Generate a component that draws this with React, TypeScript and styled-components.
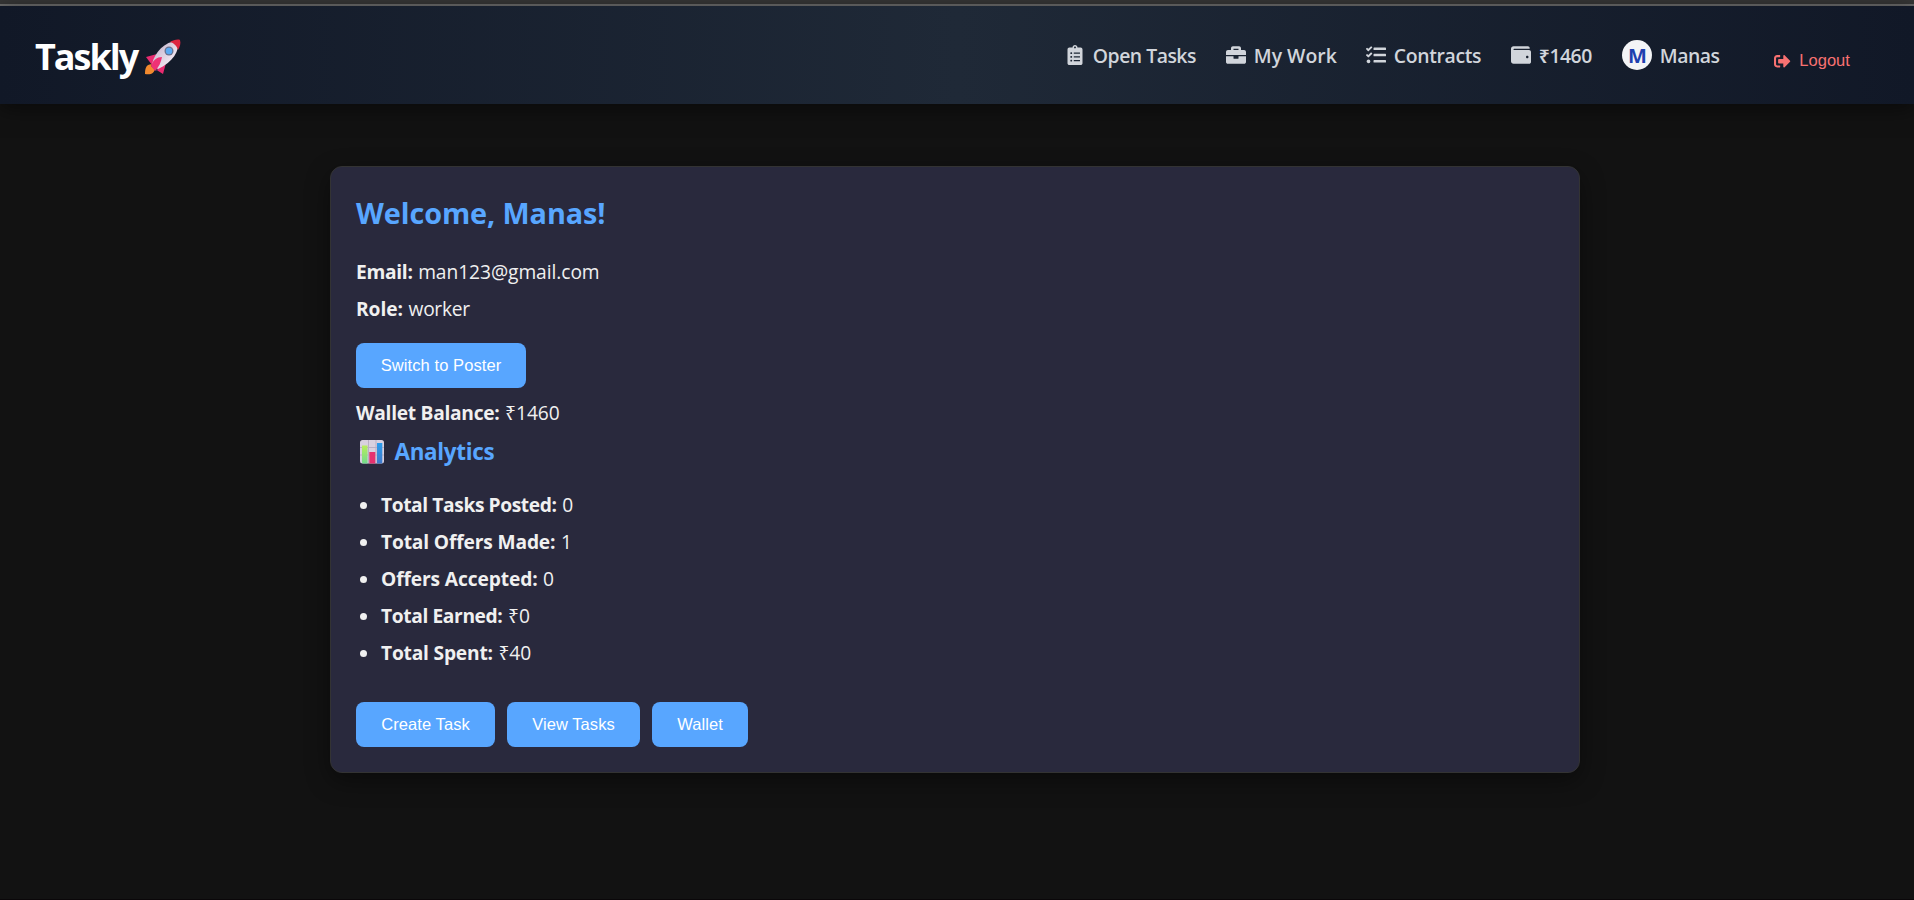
import React from "react";
import styled, { createGlobalStyle } from "styled-components";
import { FaClipboardList, FaBriefcase, FaTasks, FaWallet, FaSignOutAlt } from "react-icons/fa";

const GlobalStyle = createGlobalStyle`
  * { box-sizing: border-box; }
  body {
    margin: 0;
    background: #121212;
    color: #f0f0f0;
    font-family: "Segoe UI", "Open Sans", "Noto Sans", sans-serif;
    overflow: hidden;
  }
`;

const Page = styled.div`
  min-height: 900px;
  display: flex;
  flex-direction: column;
  border-bottom: 1px solid #0a0709;
`;

const TopEdge = styled.div`
  height: 6px;
  background: #363636;
  border-bottom: 2px solid #6b6b6b;
`;

const Header = styled.header`
  height: 98px;
  padding: 0 64px 0 35px;
  display: flex;
  align-items: flex-start;
  justify-content: space-between;
  background: linear-gradient(90deg, #111827, #1f2937, #111827);
  box-shadow: 0 4px 20px rgba(0, 0, 0, 0.5);
`;

const Brand = styled.div`
  display: flex;
  align-items: center;
  gap: 7px;
  padding-top: 26px;
  color: #fff;
  font-size: 36px;
  font-weight: 700;
  line-height: 50px;
  letter-spacing: -2px;
`;

const Nav = styled.nav`
  display: flex;
  padding-top: 34px;
`;

const NavItem = styled.a<{ $width: number }>`
  width: ${(p) => p.$width}px;
  height: 30px;
  display: flex;
  align-items: center;
  gap: 7.5px;
  color: #d1d5db;
  font-size: 20px;
  svg { flex: none; }
`;

const NavLabel = styled.span<{ $tracking: number }>`
  padding-top: 2px;
  font-size: 19.4px;
  font-weight: 600;
  line-height: 30px;
  letter-spacing: ${(p) => p.$tracking}px;
  white-space: nowrap;
`;

const Avatar = styled.span`
  width: 30px;
  height: 30px;
  border-radius: 50%;
  flex: none;
  background: #f3f4f6;
  color: #1e40af;
  font-weight: 700;
  line-height: 31px;
  text-align: center;
`;

const Logout = styled.button`
  display: flex;
  align-items: center;
  gap: 8.4px;
  height: 24px;
  margin-top: 9px;
  padding: 0;
  border: 0;
  background: none;
  color: #f87171;
  font: 16.5px/24px "Liberation Sans", Arial, sans-serif;
`;

const LogoutLabel = styled.span`
  padding-bottom: 2px;
  letter-spacing: 0.05px;
`;

const Card = styled.main`
  width: 1250px;
  height: 607px;
  margin: 62px 0 0 330px;
  padding: 25px;
  border: 1px solid #333;
  border-radius: 12px;
  background: #29293d;
  box-shadow: 0 8px 24px rgba(0, 0, 0, 0.4);
`;

const Title = styled.h2`
  margin: 0 0 20px;
  padding-top: 1px;
  color: #58a6ff;
  font-size: 28.8px;
  font-weight: 700;
  line-height: 40px;
  letter-spacing: -0.08px;
`;

const Line = styled.p`
  margin: 0;
  font-size: 19.2px;
  line-height: 37px;
`;

const Label = styled.strong<{ $tracking: number }>`
  letter-spacing: ${(p) => p.$tracking}px;
`;

const Value = styled.span<{ $tracking?: number }>`
  margin-left: 5.6px;
  letter-spacing: ${(p) => p.$tracking ?? -0.06}px;
`;

const Action = styled.button<{ $width: number }>`
  width: ${(p) => p.$width}px;
  height: 45px;
  padding: 0;
  border: 0;
  border-radius: 8px;
  background: #58a6ff;
  color: #fff;
  font: 16.5px "Liberation Sans", Arial, sans-serif;
  letter-spacing: 0.08px;
`;

const SwitchRow = styled.div`
  display: flex;
  padding: 16px 0 6px;
`;

const Subtitle = styled.h3`
  display: flex;
  align-items: center;
  gap: 10.5px;
  margin: 2px 0 16px;
  padding-left: 4px;
  color: #58a6ff;
  font-size: 22.4px;
  font-weight: 700;
  line-height: 37px;
  letter-spacing: -0.3px;
`;

const Stats = styled.ul`
  margin: 0 0 31px;
  padding: 0;
  list-style: none;
`;

const Stat = styled.li`
  display: flex;
  align-items: center;
  font-size: 19.2px;
  line-height: 37px;
  &::before {
    content: "";
    width: 7px;
    height: 7px;
    margin: 1px 14px 0 4px;
    border-radius: 50%;
    background: #f0f0f0;
  }
`;

const Actions = styled.div`
  display: flex;
  gap: 12px;
`;

const Rocket = () => (
  <svg width="38" height="38" viewBox="0 0 38 38">
    <defs>
      <linearGradient id="hull" x1="0" y1="0" x2="1" y2="1">
        <stop offset="0.2" stopColor="#c9b9d0" />
        <stop offset="0.7" stopColor="#eee3ee" />
      </linearGradient>
    </defs>
    <path d="M9 26C2 26 1 30 1 36c5 1 10 0 10-7z" fill="#f28a2e" />
    <path d="M13 16 2 19l6 8zM22 25l-3 11-8-5z" fill="#e92b70" />
    <path d="M8 26C11 14 20 4 34 2.500c2 10-5 21.500-20 28.500z" fill="url(#hull)" />
    <path d="M26 4c3-2 8-3 10-2 1 3 0 7-2 10-1-4-4-7-8-8z" fill="#dd2440" />
    <path d="m8 26 6 6-2 1-5-5z" fill="#4a3a5c" />
    <circle cx="25" cy="13" r="4.500" fill="#69728f" />
    <circle cx="25" cy="13" r="3.200" fill="#5aa9f2" />
    <path d="M7 28c2-6 6-9 11-9-1 5-3 10-7 14z" fill="#ef3275" />
  </svg>
);

const Chart = () => (
  <svg width="24" height="24" viewBox="0 0 24 24">
    <defs>
      <linearGradient id="green" x1="0" y1="0" x2="0" y2="1">
        <stop stopColor="#b8ed5b" />
        <stop offset="1" stopColor="#72db8c" />
      </linearGradient>
      <linearGradient id="blue" x1="0" y1="0" x2="0" y2="1">
        <stop stopColor="#2b9cec" />
        <stop offset="1" stopColor="#4079cb" />
      </linearGradient>
    </defs>
    <rect width="24" height="23.500" rx="2.500" fill="#d8d0df" />
    <path d="M8.500 0v23M16 0v23M0 7.500h24M0 15h24" stroke="#b9aec4" strokeWidth="1" />
    <path d="M2 5.500h5.500v18h-4A1.500 1.500 0 0 1 2 22z" fill="url(#green)" />
    <path d="M9.300 12h6v11.500h-6z" fill="#e5316f" />
    <path d="M17 3h5.300v20.500H17z" fill="url(#blue)" />
  </svg>
);

const stats = [
  { label: "Total Tasks Posted:", value: "0", tracking: -0.4 },
  { label: "Total Offers Made:", value: "1", tracking: -0.15 },
  { label: "Offers Accepted:", value: "0", tracking: -0.12 },
  { label: "Total Earned:", value: "₹0", tracking: -0.38 },
  { label: "Total Spent:", value: "₹40", tracking: -0.2 },
];

export default function App() {
  return (
    <Page>
      <GlobalStyle />
      <TopEdge />
      <Header>
        <Brand>Taskly<Rocket /></Brand>
        <Nav>
          <NavItem $width={161}><FaClipboardList /><NavLabel $tracking={-0.5}>Open Tasks</NavLabel></NavItem>
          <NavItem $width={140}><FaBriefcase /><NavLabel $tracking={0}>My Work</NavLabel></NavItem>
          <NavItem $width={145}><FaTasks /><NavLabel $tracking={-0.35}>Contracts</NavLabel></NavItem>
          <NavItem $width={111}><FaWallet /><NavLabel $tracking={-0.5}>₹1460</NavLabel></NavItem>
          <NavItem $width={152}><Avatar>M</Avatar><NavLabel $tracking={-0.5}>Manas</NavLabel></NavItem>
          <Logout><FaSignOutAlt /><LogoutLabel>Logout</LogoutLabel></Logout>
        </Nav>
      </Header>
      <Card>
        <Title>Welcome, Manas!</Title>
        <Line><Label $tracking={-0.3}>Email:</Label><Value>man123@gmail.com</Value></Line>
        <Line><Label $tracking={-0.05}>Role:</Label><Value $tracking={-0.3}>worker</Value></Line>
        <SwitchRow><Action $width={170}>Switch to Poster</Action></SwitchRow>
        <Line><Label $tracking={-0.28}>Wallet Balance:</Label><Value>₹1460</Value></Line>
        <Subtitle><Chart />Analytics</Subtitle>
        <Stats>
          {stats.map((s) => (
            <Stat key={s.label}><Label $tracking={s.tracking}>{s.label}</Label><Value>{s.value}</Value></Stat>
          ))}
        </Stats>
        <Actions>
          <Action $width={139}>Create Task</Action>
          <Action $width={133}>View Tasks</Action>
          <Action $width={96}>Wallet</Action>
        </Actions>
      </Card>
    </Page>
  );
}
